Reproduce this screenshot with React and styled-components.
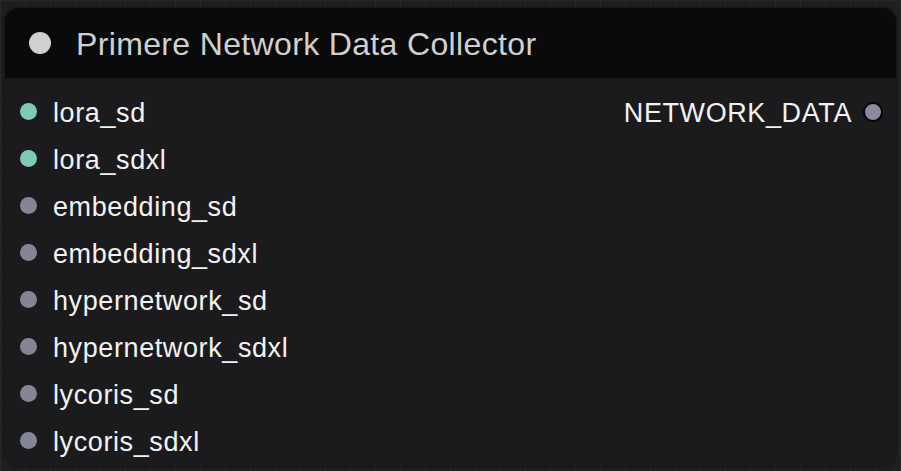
import React from 'react';
import styled, { createGlobalStyle } from 'styled-components';

const GlobalStyle = createGlobalStyle`
  html, body {
    margin: 0;
    padding: 0;
    width: 901px;
    height: 471px;
    overflow: hidden;
    background: #202021;
    font-family: "Liberation Sans", Arial, sans-serif;
  }
`;

// canvas with faint grid behind the node
const Canvas = styled.div`
  width: 901px;
  height: 471px;
  box-sizing: border-box;
  padding: 8px 5px 5px 5px;
  background-color: #1f1f20;
  background-image:
    linear-gradient(to right, #28282a 1px, transparent 1px),
    linear-gradient(to bottom, #28282a 1px, transparent 1px);
  background-size: 25px 25px;
`;

const Node = styled.div`
  height: 458px;
  display: flex;
  flex-direction: column;
  background: #1b1b1e;
  border-radius: 14px;
  overflow: hidden;
  box-shadow: 0 0 4px rgba(0, 0, 0, 0.6);
`;

const TitleBar = styled.div`
  height: 70px;
  flex-shrink: 0;
  display: flex;
  align-items: center;
  gap: 25px;
  padding-left: 24px;
  background: #0a0a0c;
`;

const TitleDot = styled.span`
  width: 22px;
  height: 22px;
  border-radius: 50%;
  background: #d0d0d0;
`;

const Title = styled.h1`
  margin: 0;
  font-size: 32px;
  font-weight: 400;
  letter-spacing: 0.35px;
  color: #d0d0d0;
  line-height: 1;
  padding-top: 2px;
`;

const Body = styled.div`
  display: grid;
  grid-template-columns: 1fr auto;
  padding-top: 10px;
`;

const Column = styled.div`
  display: flex;
  flex-direction: column;
`;

const Slot = styled.div`
  height: 47px;
  display: flex;
  align-items: center;
  flex-direction: ${p => (p.$output ? 'row-reverse' : 'row')};
  gap: ${p => (p.$output ? '11px' : '14px')};
  padding: ${p => (p.$output ? '0 13px 0 0' : '0 0 0 13px')};
`;

const Dot = styled.span`
  width: ${p => (p.$ring ? '16px' : '17px')};
  height: ${p => (p.$ring ? '16px' : '17px')};
  border-radius: 50%;
  flex-shrink: 0;
  box-sizing: content-box;
  background: ${p => p.$color};
  border: ${p => (p.$ring ? '2px solid #050505' : 'none')};
  margin: ${p => (p.$ring ? '0' : '0 2px')};
`;

const Label = styled.span`
  font-size: 27px;
  letter-spacing: 0.6px;
  color: #f2f2f2;
  line-height: 1;
  padding-top: 3px;
`;

const inputs = [
  { name: 'lora_sd', color: '#7ecab4' },
  { name: 'lora_sdxl', color: '#7ecab4' },
  { name: 'embedding_sd', color: '#858598' },
  { name: 'embedding_sdxl', color: '#858598' },
  { name: 'hypernetwork_sd', color: '#858598' },
  { name: 'hypernetwork_sdxl', color: '#858598' },
  { name: 'lycoris_sd', color: '#858598' },
  { name: 'lycoris_sdxl', color: '#858598' },
];

export default function App() {
  return (
    <>
      <GlobalStyle />
      <Canvas>
        <Node>
          <TitleBar>
            <TitleDot />
            <Title>Primere Network Data Collector</Title>
          </TitleBar>
          <Body>
            <Column>
              {inputs.map(i => (
                <Slot key={i.name}>
                  <Dot $color={i.color} />
                  <Label>{i.name}</Label>
                </Slot>
              ))}
            </Column>
            <Column>
              <Slot $output>
                <Dot $color="#8a8aa0" $ring />
                <Label>NETWORK_DATA</Label>
              </Slot>
            </Column>
          </Body>
        </Node>
      </Canvas>
    </>
  );
}
